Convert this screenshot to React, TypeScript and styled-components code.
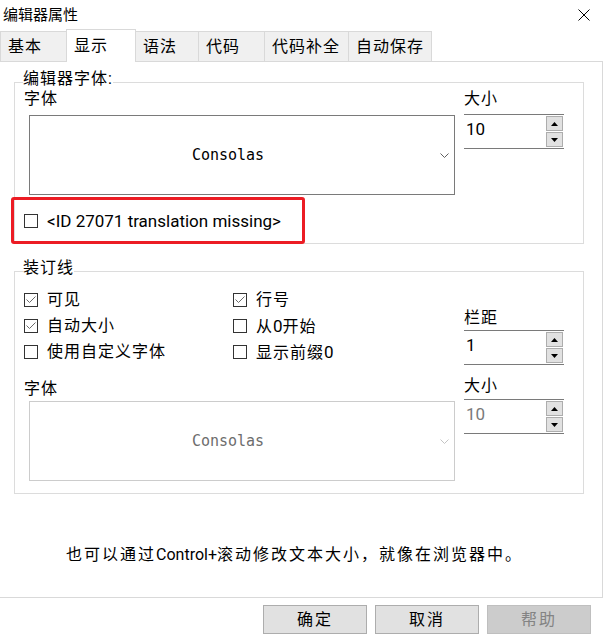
import React from 'react';
import styled, { createGlobalStyle } from 'styled-components';

const GlobalStyle = createGlobalStyle`
  html, body {
    margin: 0;
    padding: 0;
    background: #ffffff;
  }
  body {
    font-family: Roboto, "Noto Sans CJK SC", sans-serif;
    color: #000000;
  }
  *, *::before, *::after {
    box-sizing: border-box;
  }
`;

const Window = styled.div`
  width: 603px;
  height: 644px;
  display: flex;
  flex-direction: column;
  background: #ffffff;
  overflow: hidden;
`;

const TitleBar = styled.div`
  height: 29px;
  display: flex;
  align-items: center;
  justify-content: space-between;
  padding: 0 13px 0 3px;
`;

const Title = styled.span`
  font-size: 15px;
  line-height: 18px;
`;

const CloseButton = styled.button`
  width: 12px;
  height: 12px;
  padding: 0;
  border: 0;
  background: none;
  display: flex;

  svg {
    display: block;
  }
`;

const TabStrip = styled.div`
  height: 32px;
  display: flex;
  align-items: flex-end;
`;

const Tab = styled.div<{ $width: number; $active?: boolean }>`
  width: ${p => p.$width}px;
  height: ${p => (p.$active ? 33 : 30)}px;
  margin: 0 0 ${p => (p.$active ? -1 : 0)}px -1px;
  padding-left: 7px;
  display: flex;
  align-items: center;
  border: 1px solid #d9d9d9;
  border-bottom: none;
  background: ${p => (p.$active ? '#ffffff' : '#f0f0f0')};
  position: relative;
  z-index: ${p => (p.$active ? 1 : 0)};
  font-size: 16px;
  line-height: 18px;
  letter-spacing: 1px;

  &:first-child {
    margin-left: 0;
  }
`;

const Panel = styled.div`
  width: 603px;
  height: 537px;
  border: 1px solid #d9d9d9;
  border-left: none;
  padding-left: 14px;
  display: flex;
  flex-direction: column;
  align-items: flex-start;
`;

const Group = styled.section<{ $gap: number }>`
  width: 570px;
  margin-top: ${p => p.$gap}px;
  border: 1px solid #dcdcdc;
  padding: 0 0 12px 9px;
  display: flex;
  flex-direction: column;
  align-items: flex-start;
`;

const Caption = styled.div`
  margin: -13px 0 0 -1px;
  background: #ffffff;
  font-size: 16px;
  line-height: 18px;
  letter-spacing: 1px;
`;

const FieldGrid = styled.div<{ $top?: number }>`
  display: grid;
  grid-template-columns: 431px 100px;
  column-gap: 9px;
  align-items: start;
  margin-top: ${p => p.$top ?? 0}px;
`;

const Field = styled.div<{ $gap: number; $offset?: number }>`
  display: flex;
  flex-direction: column;
  align-items: flex-start;
  gap: ${p => p.$gap}px;
  margin-top: ${p => p.$offset ?? 0}px;
`;

const FieldLabel = styled.div`
  font-size: 16px;
  line-height: 18px;
  letter-spacing: 1px;
`;

const Combo = styled.div<{ $disabled?: boolean }>`
  width: 426px;
  height: 80px;
  margin-left: 5px;
  border: 1px solid ${p => (p.$disabled ? '#cccccc' : '#7a7a7a')};
  background: #ffffff;
  display: flex;
  align-items: center;
`;

const ComboText = styled.span<{ $disabled?: boolean }>`
  flex: 1;
  text-align: center;
  font-family: "DejaVu Sans Mono", "Liberation Mono", monospace;
  font-size: 15px;
  line-height: 18px;
  color: ${p => (p.$disabled ? '#6d6d6d' : '#000000')};
`;

const ComboArrow = styled.span`
  width: 28px;
  display: flex;
  justify-content: flex-end;
  padding-right: 5px;

  svg {
    display: block;
  }
`;

const Spin = styled.div`
  width: 100px;
  height: 35px;
  border-top: 1px solid #7a7a7a;
  border-bottom: 1px solid #7a7a7a;
  display: flex;
  justify-content: space-between;
  align-items: flex-start;
  padding: 1px 1px 0 2px;
`;

const SpinValue = styled.span<{ $disabled?: boolean }>`
  margin-top: 3px;
  font-size: 17px;
  line-height: 20px;
  color: ${p => (p.$disabled ? '#7a7a7a' : '#000000')};
`;

const SpinButtons = styled.div`
  display: flex;
  flex-direction: column;
  gap: 1px;
`;

const SpinButton = styled.span`
  width: 17px;
  height: 15px;
  background: #e1e1e1;
  border: 1px solid #adadad;
  display: flex;
  align-items: center;
  justify-content: center;

  svg {
    display: block;
  }
`;

const CheckRow = styled.label<{ $height: number; $top?: number }>`
  position: relative;
  display: flex;
  align-items: center;
  gap: 9px;
  height: ${p => p.$height}px;
  margin-top: ${p => p.$top ?? 0}px;
  font-size: 16px;
  line-height: 18px;
  letter-spacing: 1px;
`;

const Box = styled.span`
  width: 14px;
  height: 14px;
  flex: none;
  border: 1px solid #333333;
  background: #ffffff;
  display: flex;
  align-items: center;
  justify-content: center;

  svg {
    display: block;
  }
`;

const Latin = styled.span<{ $size?: number }>`
  font-family: Roboto, sans-serif;
  font-size: ${p => p.$size ?? 17}px;
  letter-spacing: 0;
`;

const Highlight = styled.span`
  position: absolute;
  top: -14px;
  left: -13px;
  width: 294px;
  height: 47px;
  border: 3px solid #ec1c24;
  border-radius: 3px;
  pointer-events: none;
`;

const GutterGrid = styled.div`
  display: grid;
  grid-template-columns: 209px 231px 100px;
  grid-template-rows: repeat(3, 26px);
  grid-auto-flow: column;
  margin-top: 10px;
`;

const SpacingField = styled.div`
  grid-row: 1 / span 3;
  display: flex;
  flex-direction: column;
  justify-content: flex-end;
  align-items: flex-start;
  gap: 3px;
`;

const Note = styled.div`
  width: 602px;
  margin: 52px 0 0 -14px;
  padding-right: 13px;
  text-align: center;
  font-size: 16px;
  line-height: 18px;
  letter-spacing: 2px;
`;

const Footer = styled.div`
  display: flex;
  justify-content: flex-end;
  gap: 8px;
  padding: 7px 12px 0 0;
`;

const DialogButton = styled.button`
  width: 104px;
  height: 29px;
  padding: 0;
  background: #e1e1e1;
  border: 1px solid #adadad;
  font-family: Roboto, "Noto Sans CJK SC", sans-serif;
  font-size: 16px;
  line-height: 18px;
  letter-spacing: 2px;
  color: #000000;

  &:disabled {
    background: #cccccc;
    border-color: #bfbfbf;
    color: #838383;
  }
`;

const tabs = [
  { label: '基本', width: 67 },
  { label: '显示', width: 70, active: true },
  { label: '语法', width: 64 },
  { label: '代码', width: 67 },
  { label: '代码补全', width: 85 },
  { label: '自动保存', width: 84 },
];

const CheckMark = () => (
  <svg width="10" height="8" viewBox="0 0 10 8">
    <polyline points="0.5,3.5 3.5,6.5 9.5,0.5" fill="none" stroke="#6a6a6a" strokeWidth="1" />
  </svg>
);

const CheckBox: React.FC<{ checked?: boolean; height: number; top?: number; children: React.ReactNode }> = ({
  checked,
  height,
  top,
  children,
}) => (
  <CheckRow $height={height} $top={top}>
    <Box>{checked && <CheckMark />}</Box>
    <span>{children}</span>
  </CheckRow>
);

const Chevron: React.FC<{ color: string }> = ({ color }) => (
  <svg width="9" height="5" viewBox="0 0 9 5">
    <polyline points="0.5,0.5 4.5,4.5 8.5,0.5" fill="none" stroke={color} strokeWidth="1" />
  </svg>
);

const SpinBox: React.FC<{ value: string; disabled?: boolean }> = ({ value, disabled }) => (
  <Spin>
    <SpinValue $disabled={disabled}>{value}</SpinValue>
    <SpinButtons>
      <SpinButton>
        <svg width="7" height="4" viewBox="0 0 7 4">
          <polygon points="3.5,0 7,4 0,4" fill="#000" />
        </svg>
      </SpinButton>
      <SpinButton>
        <svg width="7" height="4" viewBox="0 0 7 4">
          <polygon points="0,0 7,0 3.5,4" fill="#000" />
        </svg>
      </SpinButton>
    </SpinButtons>
  </Spin>
);

const FontCombo: React.FC<{ disabled?: boolean }> = ({ disabled }) => (
  <Combo $disabled={disabled}>
    <ComboText $disabled={disabled}>Consolas</ComboText>
    <ComboArrow>
      <Chevron color={disabled ? '#c4c4c4' : '#606060'} />
    </ComboArrow>
  </Combo>
);

export default function App() {
  return (
    <Window>
      <GlobalStyle />
      <TitleBar>
        <Title>编辑器属性</Title>
        <CloseButton aria-label="关闭">
          <svg width="12" height="12" viewBox="0 0 12 12">
            <path d="M0.5 0.5 L11.5 11.5 M11.5 0.5 L0.5 11.5" stroke="#000" strokeWidth="1" />
          </svg>
        </CloseButton>
      </TitleBar>

      <TabStrip>
        {tabs.map(t => (
          <Tab key={t.label} $width={t.width} $active={t.active}>
            {t.label}
          </Tab>
        ))}
      </TabStrip>

      <Panel>
        <Group $gap={20}>
          <Caption>编辑器字体:</Caption>
          <FieldGrid $top={2}>
            <Field $gap={7}>
              <FieldLabel>字体</FieldLabel>
              <FontCombo />
            </Field>
            <Field $gap={6}>
              <FieldLabel>大小</FieldLabel>
              <SpinBox value="10" />
            </Field>
          </FieldGrid>
          <CheckRow $height={20} $top={16}>
            <Box />
            <Latin>&lt;ID 27071 translation missing&gt;</Latin>
            <Highlight />
          </CheckRow>
        </Group>

        <Group $gap={27}>
          <Caption>装订线</Caption>
          <GutterGrid>
            <CheckBox checked height={26}>可见</CheckBox>
            <CheckBox checked height={26}>自动大小</CheckBox>
            <CheckBox height={26}>使用自定义字体</CheckBox>
            <CheckBox checked height={26}>行号</CheckBox>
            <CheckBox height={26}>
              从<Latin>0</Latin>开始
            </CheckBox>
            <CheckBox height={26}>
              显示前缀<Latin>0</Latin>
            </CheckBox>
            <SpacingField>
              <FieldLabel>栏距</FieldLabel>
              <SpinBox value="1" />
            </SpacingField>
          </GutterGrid>
          <FieldGrid>
            <Field $gap={3} $offset={15}>
              <FieldLabel>字体</FieldLabel>
              <FontCombo disabled />
            </Field>
            <Field $gap={4} $offset={12}>
              <FieldLabel>大小</FieldLabel>
              <SpinBox value="10" disabled />
            </Field>
          </FieldGrid>
        </Group>

        <Note>
          也可以通过<Latin $size={16}>Control+</Latin>滚动修改文本大小，就像在浏览器中。
        </Note>
      </Panel>

      <Footer>
        <DialogButton>确定</DialogButton>
        <DialogButton>取消</DialogButton>
        <DialogButton disabled>帮助</DialogButton>
      </Footer>
    </Window>
  );
}
